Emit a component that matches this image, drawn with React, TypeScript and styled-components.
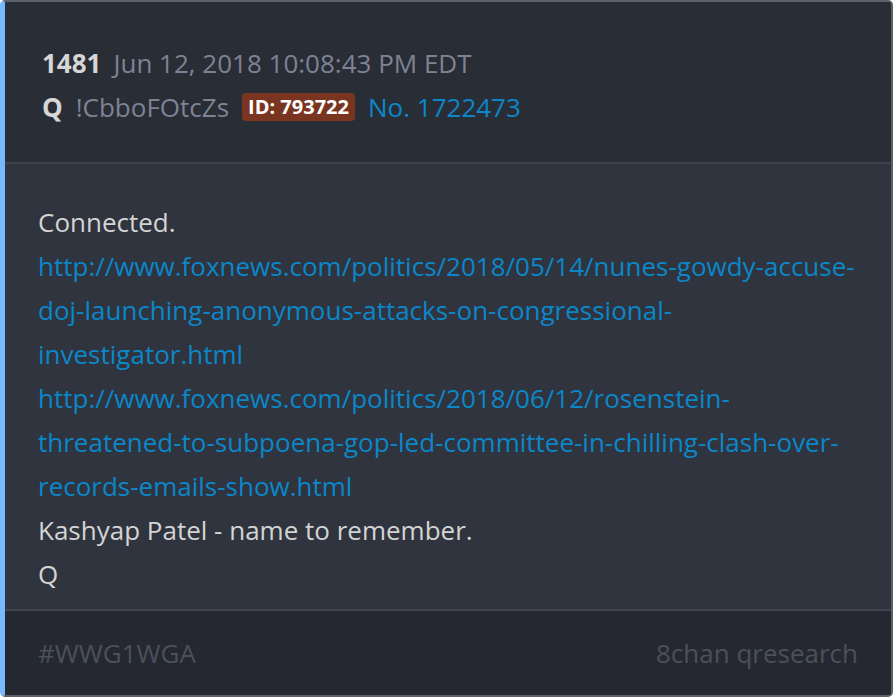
import React from "react";
import styled, { createGlobalStyle } from "styled-components";

const Global = createGlobalStyle`
  html, body { margin: 0; padding: 0; background: #ffffff; }
  body { font-family: "Open Sans", "Noto Sans", sans-serif; }
`;

const Card = styled.div`
  box-sizing: border-box;
  width: 893px;
  height: 697px;
  display: flex;
  flex-direction: column;
  border: 2px solid #5c606b;
  border-left: 5px solid #78b8ff;
  border-radius: 5px;
  overflow: hidden;
  background: #2f343e;
`;

const Header = styled.div`
  background: #292d36;
  padding: 39px 0 33px 37px;
  border-bottom: 2px solid #3e434d;
  display: flex;
  flex-direction: column;
`;

const Line = styled.div<{ $gap: number }>`
  display: flex;
  align-items: center;
  gap: ${(p) => p.$gap}px;
  height: 44px;
  font-size: 26px;
`;

const Strong = styled.span`
  font-weight: 700;
  color: #d6d6d6;
`;

const Muted = styled.span`
  color: #7e8394;
`;

const Badge = styled.span`
  background: #7a3520;
  color: #ffffff;
  font-weight: 700;
  font-size: 20px;
  line-height: 28px;
  padding: 0 6px;
  border-radius: 4px;
`;

const PostNo = styled.span`
  color: #0b87c9;
`;

const Body = styled.div`
  flex: 1;
  padding: 36px 33px 0 33px;
  font-size: 26px;
  line-height: 44px;
  color: #d4d4d4;
`;

const Link = styled.a`
  color: #0b87c9;
  text-decoration: none;
  display: block;
`;

const Footer = styled.div`
  background: #252830;
  border-top: 2px solid #3e434d;
  height: 84px;
  padding: 0 33px;
  display: flex;
  justify-content: space-between;
  align-items: center;
  font-size: 26px;
  color: #4b505c;
`;

export default function App() {
  return (
    <>
      <Global />
      <Card>
        <Header>
          <Line $gap={12}>
            <Strong>1481</Strong>
            <Muted>Jun 12, 2018 10:08:43 PM EDT</Muted>
          </Line>
          <Line $gap={13}>
            <Strong>Q</Strong>
            <Muted>!CbboFOtcZs</Muted>
            <Badge>ID: 793722</Badge>
            <PostNo>No. 1722473</PostNo>
          </Line>
        </Header>
        <Body>
          <div>Connected.</div>
          <Link href="#">http://www.foxnews.com/politics/2018/05/14/nunes-gowdy-accuse-doj-launching-anonymous-attacks-on-congressional-investigator.html</Link>
          <Link href="#">http://www.foxnews.com/politics/2018/06/12/rosenstein-threatened-to-subpoena-gop-led-committee-in-chilling-clash-over-records-emails-show.html</Link>
          <div>Kashyap Patel - name to remember.</div>
          <div>Q</div>
        </Body>
        <Footer>
          <span>#WWG1WGA</span>
          <span>8chan qresearch</span>
        </Footer>
      </Card>
    </>
  );
}
